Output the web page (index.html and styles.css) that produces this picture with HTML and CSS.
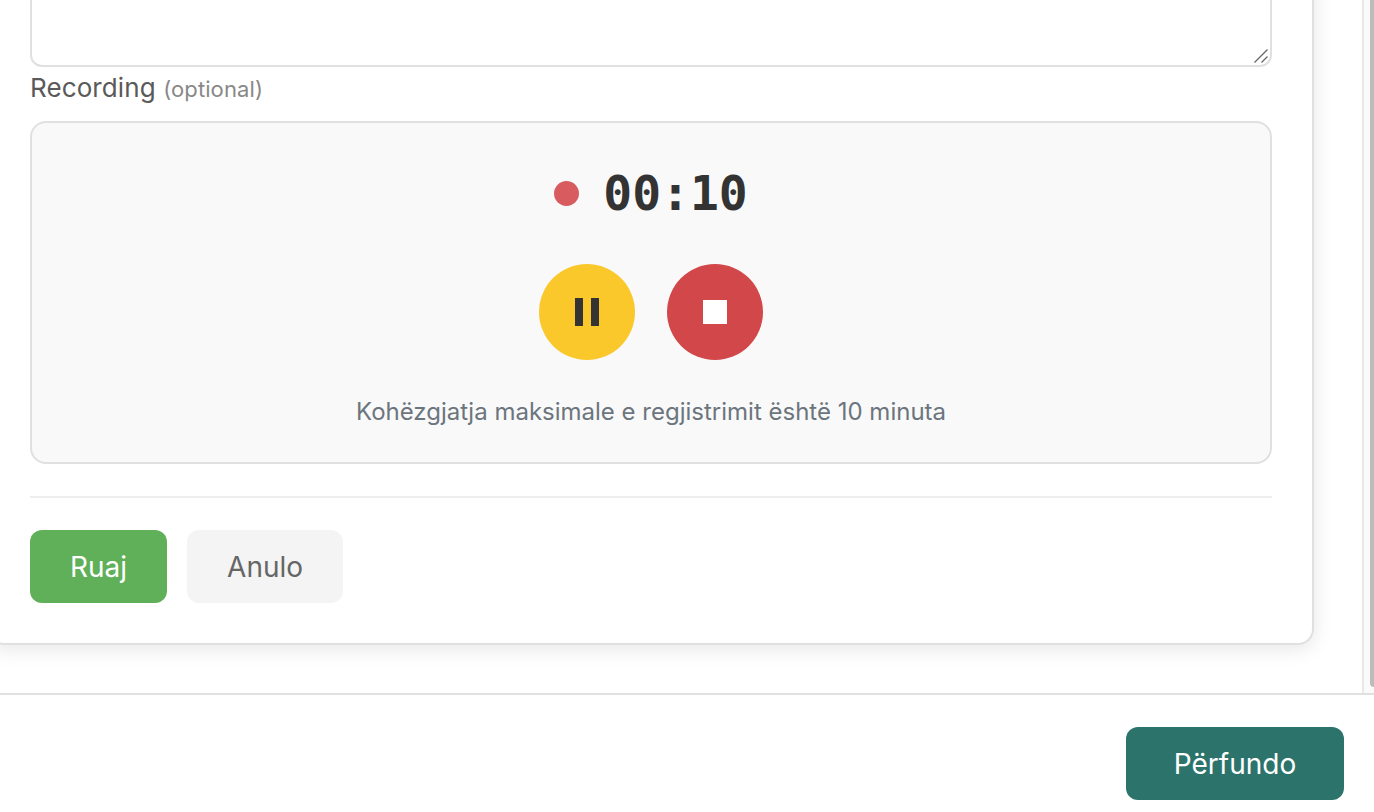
FILE: index.html
```html
<!DOCTYPE html>
<html lang="en">
<head>
  <meta charset="UTF-8" />
  <title>Recording</title>
  <link rel="stylesheet" href="styles.css">
</head>
<body>

<div class="page">
  <!-- Scrolling content -->
  <div class="content">
    <div class="card">
      <div class="notes-wrap">
        <textarea class="notes" aria-label="Notes"></textarea>
        <svg class="grip" width="16" height="16" viewBox="0 0 16 16" aria-hidden="true">
          <path d="M1.5 14.5 L14.5 1.5 M8.5 14.5 L14.5 8.5" stroke="#666" stroke-width="1.3" fill="none"/>
        </svg>
      </div>

      <label class="field-label">Recording <span class="optional">(optional)</span></label>

      <div class="recorder">
        <div class="timer-row">
          <span class="rec-dot"></span>
          <span class="timer">00:10</span>
        </div>
        <div class="controls">
          <button class="round-btn pause" aria-label="Pause">
            <span class="pause-bar"></span>
            <span class="pause-bar"></span>
          </button>
          <button class="round-btn stop" aria-label="Stop">
            <span class="stop-square"></span>
          </button>
        </div>
        <p class="hint">Kohëzgjatja maksimale e regjistrimit është 10 minuta</p>
      </div>

      <div class="actions">
        <button class="btn btn-save">Ruaj</button>
        <button class="btn btn-cancel">Anulo</button>
      </div>
    </div>
  </div>

  <div class="scroll-track">
    <div class="scroll-thumb"></div>
  </div>
</div>

<div class="footer">
  <button class="btn-finish">Përfundo</button>
</div>

</body>
</html>
```

FILE: styles.css
```css
html, body {
  margin: 0;
  height: 100%;
  overflow: hidden;
  background: #fff;
  font-family: Inter, "Noto Sans", sans-serif;
}

.page {
  display: flex;
  height: 693px;
  border-bottom: 2px solid #e0e0e0;
  overflow: hidden;
}

.content {
  flex: 1;
  min-width: 0;
  overflow: hidden;
}

.card {
  box-sizing: border-box;
  width: 1326px;
  height: 745px;
  margin: -100px 0 0 -12px;
  padding: 0 40px 0 42px;
  background: #fff;
  border-radius: 16px;
  border-bottom: 2px solid #e0e0e0;
  border-right: 2px solid #e0e0e0;
  box-shadow: 0 4px 20px rgba(0,0,0,0.1);
}

.notes-wrap {
  position: relative;
}

.notes {
  display: block;
  box-sizing: border-box;
  width: 100%;
  height: 167px;
  border: 2px solid #e0e0e0;
  border-radius: 12px;
  background: #fff;
  resize: none;
}

.grip {
  position: absolute;
  right: 3px;
  bottom: 3px;
}

.field-label {
  display: block;
  margin-top: 7px;
  font-size: 26px;
  line-height: 28px;
  letter-spacing: 0.1px;
  color: #5a5a5a;
}

.optional {
  font-size: 22px;
  color: #888;
}

.recorder {
  box-sizing: border-box;
  height: 343px;
  margin-top: 18px;
  padding-top: 41px;
  background: #f9f9f9;
  border: 2px solid #e0e0e0;
  border-radius: 16px;
  text-align: center;
}

.timer-row {
  display: flex;
  justify-content: center;
  align-items: center;
  gap: 24px;
}

.rec-dot {
  width: 25px;
  height: 25px;
  border-radius: 50%;
  background: #d85c5f;
}

.timer {
  font-family: "DejaVu Sans Mono", monospace;
  font-weight: bold;
  font-size: 48px;
  line-height: 58px;
  color: #333;
}

.controls {
  display: flex;
  justify-content: center;
  gap: 32px;
  margin-top: 42px;
}

.round-btn {
  display: flex;
  justify-content: center;
  align-items: center;
  width: 96px;
  height: 96px;
  padding: 0;
  border: none;
  border-radius: 50%;
}

.pause {
  gap: 8px;
  background: #fbc82c;
}

.pause-bar {
  width: 8px;
  height: 28px;
  background: #333;
}

.stop {
  background: #d1474a;
}

.stop-square {
  width: 24px;
  height: 24px;
  background: #fff;
}

.hint {
  margin: 38px 0 0;
  font-size: 24px;
  line-height: 28px;
  color: #6c757d;
}

.actions {
  display: flex;
  gap: 20px;
  margin-top: 32px;
  padding-top: 32px;
  border-top: 2px solid #eee;
}

.btn {
  height: 73px;
  padding: 0 40px;
  border: none;
  border-radius: 12px;
  font-family: inherit;
  font-size: 28px;
}

.btn-save {
  background: #5fb058;
  color: #fff;
}

.btn-cancel {
  background: #f4f4f4;
  color: #666;
}

.scroll-track {
  box-sizing: border-box;
  width: 12px;
  border-left: 2px solid #e8e8e8;
  background: #fafafa;
}

.scroll-thumb {
  width: 4px;
  height: 687px;
  margin-left: 6px;
  background: #bbb;
  border-radius: 0 0 0 8px;
}

.footer {
  display: flex;
  justify-content: flex-end;
  padding: 32px 30px 0 0;
}

.btn-finish {
  width: 218px;
  height: 73px;
  border: none;
  border-radius: 12px;
  background: #2c746b;
  color: #fff;
  font-family: inherit;
  font-size: 28px;
}
```
